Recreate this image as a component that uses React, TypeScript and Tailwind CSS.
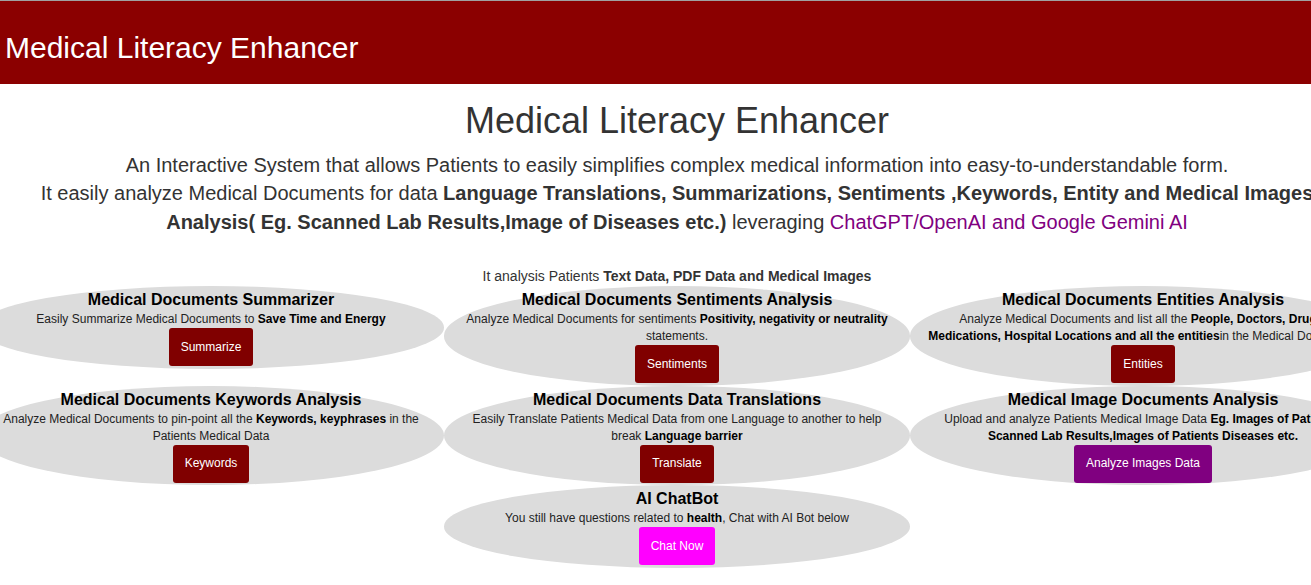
import type { ReactNode } from 'react';

type Card = {
  title: string;
  body: ReactNode;
  button: string;
  tone: string;
  col?: string;
};

const cards: Card[] = [
  {
    title: 'Medical Documents Summarizer',
    body: (
      <>
        Easily Summarize Medical Documents to <b className="text-black">Save Time and Energy</b>
      </>
    ),
    button: 'Summarize',
    tone: 'bg-[#800000]',
  },
  {
    title: 'Medical Documents Sentiments Analysis',
    body: (
      <>
        Analyze Medical Documents for sentiments{' '}
        <b className="text-black">Positivity, negativity or neutrality</b> statements.
      </>
    ),
    button: 'Sentiments',
    tone: 'bg-[#800000]',
  },
  {
    title: 'Medical Documents Entities Analysis',
    body: (
      <>
        Analyze Medical Documents and list all the{' '}
        <b className="text-black">
          People, Doctors, Drugs, Medications, Hospital Locations and all the entities
        </b>
        in the Medical Documents
      </>
    ),
    button: 'Entities',
    tone: 'bg-[#800000]',
  },
  {
    title: 'Medical Documents Keywords Analysis',
    body: (
      <>
        Analyze Medical Documents to pin-point all the{' '}
        <b className="text-black">Keywords, keyphrases</b> in the Patients Medical Data
      </>
    ),
    button: 'Keywords',
    tone: 'bg-[#800000]',
  },
  {
    title: 'Medical Documents Data Translations',
    body: (
      <>
        Easily Translate Patients Medical Data from one Language to another to help break{' '}
        <b className="text-black">Language barrier</b>
      </>
    ),
    button: 'Translate',
    tone: 'bg-[#800000]',
  },
  {
    title: 'Medical Image Documents Analysis',
    body: (
      <>
        Upload and analyze Patients Medical Image Data{' '}
        <b className="text-black">
          Eg. Images of Patients, Scanned Lab Results,Images of Patients Diseases etc.
        </b>
      </>
    ),
    button: 'Analyze Images Data',
    tone: 'bg-[#800080]',
  },
  {
    title: 'AI ChatBot',
    body: (
      <>
        You still have questions related to <b className="text-black">health</b>, Chat with AI Bot
        below
      </>
    ),
    button: 'Chat Now',
    tone: 'bg-[#ff00ff]',
    col: 'col-start-2',
  },
];

export default function App() {
  return (
    <div className="w-full overflow-hidden bg-white font-['Liberation_Sans',Arial,sans-serif] text-[#333]">
      <div className="w-[1354px]">
        {/* Top bar */}
        <header className="h-[84px] border-t border-[#a0a0a0] bg-[#8b0000] px-[5px] pt-[30px]">
          <h1 className="text-[30px] leading-[34px] text-white">Medical Literacy Enhancer</h1>
        </header>

        {/* Intro */}
        <section className="px-[15px] text-center">
          <h2 className="mt-[17px] mb-[10px] text-[36px] leading-[39.6px]">Medical Literacy Enhancer</h2>
          <p className="text-[20px] leading-[28.57px]">
            An Interactive System that allows Patients to easily simplifies complex medical information
            into easy-to-understandable form.
            <br />
            It easily analyze Medical Documents for data{' '}
            <b>
              Language Translations, Summarizations, Sentiments ,Keywords, Entity and Medical Images
              Analysis( Eg. Scanned Lab Results,Image of Diseases etc.)
            </b>{' '}
            leveraging <span className="text-[#800080]">ChatGPT/OpenAI and Google Gemini AI</span>
          </p>
          <p className="mt-[30px] text-[14px] leading-[20px]">
            It analysis Patients <b>Text Data, PDF Data and Medical Images</b>
          </p>
        </section>

        {/* Feature cards */}
        <div className="ml-[-22px] grid w-[1398px] grid-cols-[repeat(3,466px)] items-start">
          {cards.map((card, i) => (
            <div
              key={i}
              className={`flex flex-col items-center rounded-[50%] bg-[#dcdcdc] px-[15px] pt-[2px] pb-[2.5px] text-center ${card.col ?? ''}`}
            >
              <h4 className="text-[16px] leading-[23px] font-bold text-black">{card.title}</h4>
              <p className="text-[12px] leading-[17px] text-[#222]">{card.body}</p>
              <button
                className={`h-[38px] rounded-[3px] px-3 text-[12px] leading-[17px] text-white ${card.tone}`}
              >
                {card.button}
              </button>
            </div>
          ))}
        </div>
      </div>
    </div>
  );
}
